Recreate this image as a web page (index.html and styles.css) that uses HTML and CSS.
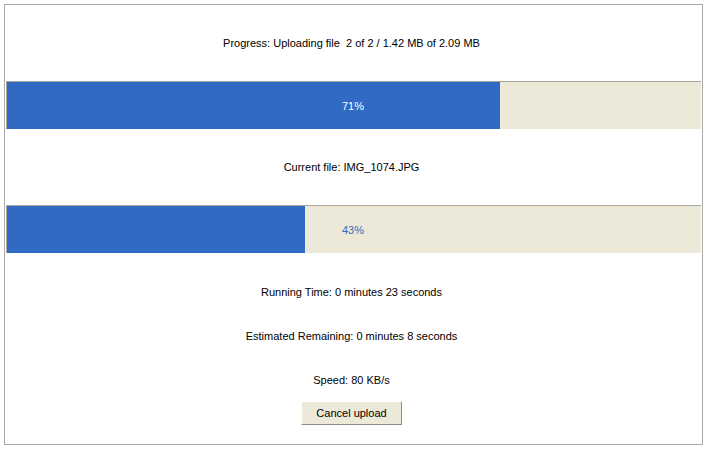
FILE: index.html
```html
<!DOCTYPE html>
<html>
<head>
<meta charset="utf-8">
<link rel="stylesheet" href="styles.css">
</head>
<body>
<div class="box">
  <div class="row">Progress: Uploading file&nbsp; 2 of 2 / 1.42 MB of 2.09 MB</div>
  <div class="bar">
    <div class="fill" style="width: 71%"></div>
    <div class="label label-light">71%</div>
  </div>
  <div class="row">Current file: IMG_1074.JPG</div>
  <div class="bar">
    <div class="fill" style="width: 43%"></div>
    <div class="label label-dark">43%</div>
  </div>
  <div class="stats">
    <div class="stat">Running Time: 0 minutes 23 seconds</div>
    <div class="stat">Estimated Remaining: 0 minutes 8 seconds</div>
    <div class="stat">Speed: 80 KB/s</div>
  </div>
  <div class="actions">
    <button class="btn" type="button">Cancel upload</button>
  </div>
</div>
</body>
</html>
```
FILE: styles.css
```css
html, body {
  margin: 0;
  padding: 0;
  background: #ffffff;
}
body {
  padding: 4px;
  font-family: "Liberation Sans", Arial, sans-serif;
  font-size: 11px;
  color: #000000;
}
.box {
  width: 695px;
  height: 439px;
  border: 1px solid #a9a9a9;
  display: flex;
  flex-direction: column;
  padding: 0 1px 0 1px;
}
.row {
  height: 76px;
  display: flex;
  align-items: center;
  justify-content: center;
  padding-right: 4px;
}
.bar {
  position: relative;
  height: 47px;
  border-top: 1px solid #aca899;
  border-left: 1px solid #aca899;
  background: #ece9d8;
}
.fill {
  height: 100%;
  background: #316ac5;
}
.label {
  position: absolute;
  left: 0;
  right: 0;
  top: 0;
  bottom: 0;
  display: flex;
  align-items: center;
  justify-content: center;
  padding-right: 2px;
}
.label-light { color: #ffffff; }
.label-dark { color: #316ac5; }
.stats {
  padding-top: 17px;
  display: flex;
  flex-direction: column;
}
.stat {
  height: 44px;
  display: flex;
  align-items: center;
  justify-content: center;
  padding-right: 4px;
}
.actions {
  display: flex;
  justify-content: center;
  padding-right: 4px;
}
.btn {
  width: 101px;
  height: 24px;
  margin-top: -1px;
  background: #ece9d8;
  border: 1px solid;
  border-color: #ffffff #8e8b80 #8e8b80 #ffffff;
  font-family: "Liberation Sans", Arial, sans-serif;
  font-size: 11px;
  color: #000000;
  padding: 0;
}
```
